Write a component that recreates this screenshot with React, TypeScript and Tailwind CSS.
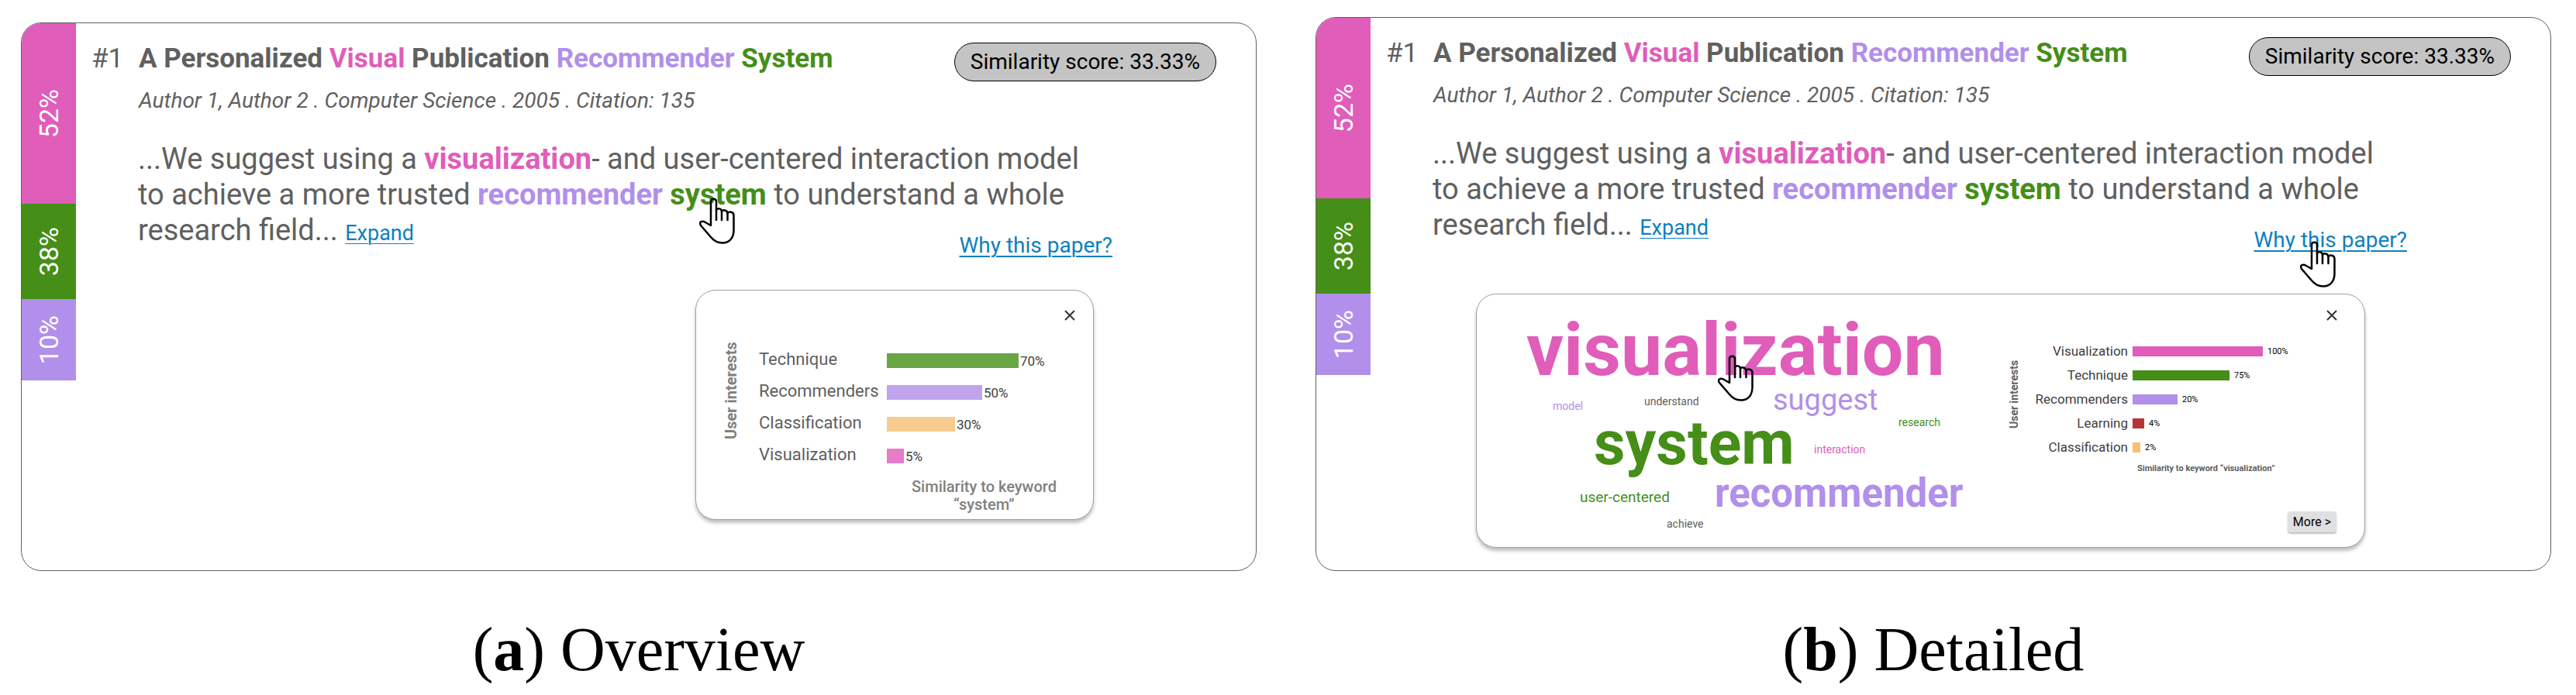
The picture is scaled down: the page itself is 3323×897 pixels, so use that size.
import type { ReactNode } from 'react';

type Bar = { label: string; value: string; width: number; color: string };

const shares = [
    { value: '52%', className: 'h-[233px] bg-[#e05dba]' },
    { value: '38%', className: 'h-[123px] bg-[#458e18]' },
    { value: '10%', className: 'h-[105px] bg-[#b28fea]' },
];

const systemBars: Bar[] = [
    { label: 'Technique', value: '70%', width: 170, color: 'bg-[#6aa646]' },
    { label: 'Recommenders', value: '50%', width: 123, color: 'bg-[#c0a4ee]' },
    { label: 'Classification', value: '30%', width: 88, color: 'bg-[#f8cb8e]' },
    { label: 'Visualization', value: '5%', width: 22, color: 'bg-[#e57dc8]' },
];

const visualizationBars: Bar[] = [
    { label: 'Visualization', value: '100%', width: 168, color: 'bg-[#e05dba]' },
    { label: 'Technique', value: '75%', width: 125, color: 'bg-[#458e18]' },
    { label: 'Recommenders', value: '20%', width: 58, color: 'bg-[#b28fea]' },
    { label: 'Learning', value: '4%', width: 15, color: 'bg-[#b43737]' },
    { label: 'Classification', value: '2%', width: 10, color: 'bg-[#f8c074]' },
];

// Free placement inside the cloud canvas
const words = [
    { text: 'visualization', className: 'left-[64px] top-[16px] text-[95px] leading-[112px] font-bold text-[#e05dba]' },
    { text: 'model', className: 'left-[98px] top-[136px] text-[14px] leading-[16px] text-[#b28fea]' },
    { text: 'understand', className: 'left-[216px] top-[130px] text-[14px] leading-[16px] text-[#606060]' },
    { text: 'suggest', className: 'left-[382px] top-[114px] text-[38px] leading-[44px] text-[#b28fea]' },
    { text: 'research', className: 'left-[544px] top-[157px] text-[14px] leading-[16px] text-[#458e18]' },
    { text: 'system', className: 'left-[151px] top-[146px] text-[79px] leading-[93px] font-bold text-[#458e18]' },
    { text: 'interaction', className: 'left-[435px] top-[192px] text-[14px] leading-[16px] text-[#e05dba]' },
    { text: 'user-centered', className: 'left-[133px] top-[251px] text-[19px] leading-[22px] text-[#458e18]' },
    { text: 'recommender', className: 'left-[307px] top-[227px] text-[51px] leading-[60px] font-bold text-[#b28fea]' },
    { text: 'achieve', className: 'left-[245px] top-[288px] text-[14px] leading-[16px] text-[#606060]' },
];

function HandCursor({ className }: { className: string }) {
    return (
        <svg
            viewBox="0 0 48 60"
            className={`pointer-events-none absolute h-[60px] w-[48px] ${className}`}
            fill="none"
            stroke="#000"
            strokeWidth="2.5"
            strokeLinejoin="round"
            strokeLinecap="round"
            aria-hidden="true"
        >
            <path d="M16 36V5C16 0.500 23 0.500 23 5V16C24 13.500 30 13.500 30 18C31 15.500 37.500 15.500 37.500 20.500C39 17.500 45.500 18 45.500 23V42C45.500 52 40 58.500 31 58.500C24 58.500 20 56 16 51L3 36C0 31 5 29.500 9 32Z" />
            <path d="M23 16V29M30 18V29M37.500 20V29" />
        </svg>
    );
}

function CloseButton({ className }: { className: string }) {
    return (
        <button type="button" aria-label="Close" className={`absolute ${className}`}>
            <svg viewBox="0 0 14 14" className="h-[14px] w-[14px]" stroke="#333" strokeWidth="2">
                <path d="M1 1L13 13M13 1L1 13" />
            </svg>
        </button>
    );
}

function VerticalText({ children, className }: { children: ReactNode; className: string }) {
    return <span className={`shrink-0 rotate-180 whitespace-nowrap [writing-mode:vertical-rl] ${className}`}>{children}</span>;
}

function PaperCard({ bodyCursor, linkCursor, children }: { bodyCursor?: boolean; linkCursor?: boolean; children: ReactNode }) {
    return (
        <article className="flex overflow-hidden rounded-[26px] border border-[#606060] bg-white">
            {/* Share of each interest */}
            <div className="w-[70px] shrink-0 text-[34px] leading-[40px] text-white">
                {shares.map((share) => (
                    <div key={share.value} className={`flex items-center justify-center ${share.className}`}>
                        <VerticalText className="">{share.value}</VerticalText>
                    </div>
                ))}
            </div>

            <div className="min-w-0 flex-1 pt-[25px] text-[#606060]">
                {/* Title and score */}
                <header className="flex items-start pr-[51px] pl-[20px]">
                    <span className="w-[61px] shrink-0 text-[35px] leading-[41px]">#1</span>
                    <div className="flex-1">
                        <h2 className="text-[35px] leading-[41px] font-bold">
                            A Personalized <span className="text-[#e05dba]">Visual</span> Publication{' '}
                            <span className="text-[#b28fea]">Recommender</span> <span className="text-[#458e18]">System</span>
                        </h2>
                        <p className="mt-[17px] text-[28px] leading-[33px] italic">
                            Author 1, Author 2 . Computer Science . 2005 . Citation: 135
                        </p>
                    </div>
                    <span className="rounded-full border border-black bg-[#c4c4c4] px-[20px] text-[28px] leading-[48px] text-black">
                        Similarity score: 33.33%
                    </span>
                </header>

                {/* Abstract */}
                <p className="mt-[36px] ml-[80px] text-[38px] leading-[46px]">
                    <span className="block">
                        ...We suggest using a <b className="text-[#e05dba]">visualization</b>- and user-centered interaction model
                    </span>
                    <span className="block">
                        to achieve a more trusted <b className="text-[#b28fea]">recommender</b>{' '}
                        <b className="relative text-[#458e18]">
                            system
                            {bodyCursor && <HandCursor className="top-[26px] left-[37px]" />}
                        </b>{' '}
                        to understand a whole
                    </span>
                    <span className="block">
                        research field...{' '}
                        <a href="#expand" className="text-[27px] leading-[32px] text-[#0e7fc0] underline decoration-1 underline-offset-4">
                            Expand
                        </a>
                    </span>
                </p>
                <div className="-mt-[20px] flex justify-end pr-[185px]">
                    <a href="#why" className="relative text-[28px] leading-[33px] text-[#0e7fc0] underline decoration-2 underline-offset-4">
                        Why this paper?
                        {linkCursor && <HandCursor className="top-[18px] left-[58px]" />}
                    </a>
                </div>

                {children}
            </div>
        </article>
    );
}

function SystemPopup() {
    return (
        <section className="relative mt-[41px] mr-[209px] mb-[65px] ml-auto flex h-[297px] w-[514px] rounded-[26px] border border-[#a0a0a0] bg-white shadow-[0_4px_4px_rgba(0,0,0,0.25)]">
            <CloseButton className="top-[25px] right-[23px]" />
            <VerticalText className="mt-[66px] ml-[33px] h-[126px] text-[20px] leading-[24px] font-bold text-[#808080]">
                User interests
            </VerticalText>
            <div className="ml-[24px]">
                <ul className="mt-[76px]">
                    {systemBars.map((bar) => (
                        <li key={bar.label} className="flex h-[41px] items-start">
                            <span className="w-[165px] text-[22px] leading-[26px]">{bar.label}</span>
                            <span className={`mt-[5px] h-[19px] ${bar.color}`} style={{ width: bar.width }} />
                            <span className="mt-[5px] ml-[2px] text-[17px] leading-[20px] text-[#404040]">{bar.value}</span>
                        </li>
                    ))}
                </ul>
                <p className="mt-[2px] ml-[197px] text-center text-[20px] leading-[23px] font-medium whitespace-nowrap text-[#808080]">
                    Similarity to keyword
                    <br />
                    “system”
                </p>
            </div>
        </section>
    );
}

function VisualizationPopup() {
    return (
        <section className="relative mt-[53px] mr-[239px] mb-[29px] ml-auto flex h-[328px] w-[1147px] rounded-[26px] border border-[#a0a0a0] bg-white shadow-[0_4px_4px_rgba(0,0,0,0.25)]">
            <CloseButton className="top-[20px] right-[35px]" />

            {/* Word cloud */}
            <div className="relative h-full w-[684px] shrink-0">
                {words.map((word) => (
                    <span key={word.text} className={`absolute whitespace-nowrap ${word.className}`}>
                        {word.text}
                    </span>
                ))}
                <HandCursor className="top-[78px] left-[310px]" />
            </div>

            <VerticalText className="mt-[83px] h-[90px] text-[14px] leading-[18px] font-bold text-[#606060]">User interests</VerticalText>
            <div className="ml-[17px] w-[320px] shrink-0 whitespace-nowrap">
                <ul className="mt-[63px]">
                    {visualizationBars.map((bar) => (
                        <li key={bar.label} className="flex h-[31px] items-start">
                            <span className="w-[121px] shrink-0 text-right text-[17px] leading-[20px] text-[#404040]">{bar.label}</span>
                            <span className={`mt-[4px] ml-[6px] h-[13px] shrink-0 ${bar.color}`} style={{ width: bar.width }} />
                            <span className="mt-[4px] ml-[6px] text-[11px] leading-[13px] text-black">{bar.value}</span>
                        </li>
                    ))}
                </ul>
                <p className="ml-[133px] text-[11px] leading-[13px] font-bold">Similarity to keyword “visualization”</p>
            </div>
            <button
                type="button"
                className="mt-auto mr-[36px] mb-[19px] ml-auto h-[27px] shrink-0 rounded-[4px] bg-[#e0e0e0] px-[7px] text-[16px] whitespace-nowrap text-black shadow-[0_2px_2px_rgba(0,0,0,0.25)]"
            >
                More &gt;
            </button>
        </section>
    );
}

export default function App() {
    return (
        <main className="grid grid-cols-2 items-end gap-x-[76px] bg-white pt-[22px] pr-[32px] pb-[20px] pl-[27px] font-[Roboto,sans-serif]">
            <figure>
                <PaperCard bodyCursor>
                    <SystemPopup />
                </PaperCard>
                <figcaption className="mt-[56px] text-center font-['Liberation_Serif',serif] text-[80px] leading-[90px] text-black">
                    (<b>a</b>) Overview
                </figcaption>
            </figure>
            <figure>
                <PaperCard linkCursor>
                    <VisualizationPopup />
                </PaperCard>
                <figcaption className="mt-[56px] text-center font-['Liberation_Serif',serif] text-[80px] leading-[90px] text-black">
                    (<b>b</b>) Detailed
                </figcaption>
            </figure>
        </main>
    );
}
